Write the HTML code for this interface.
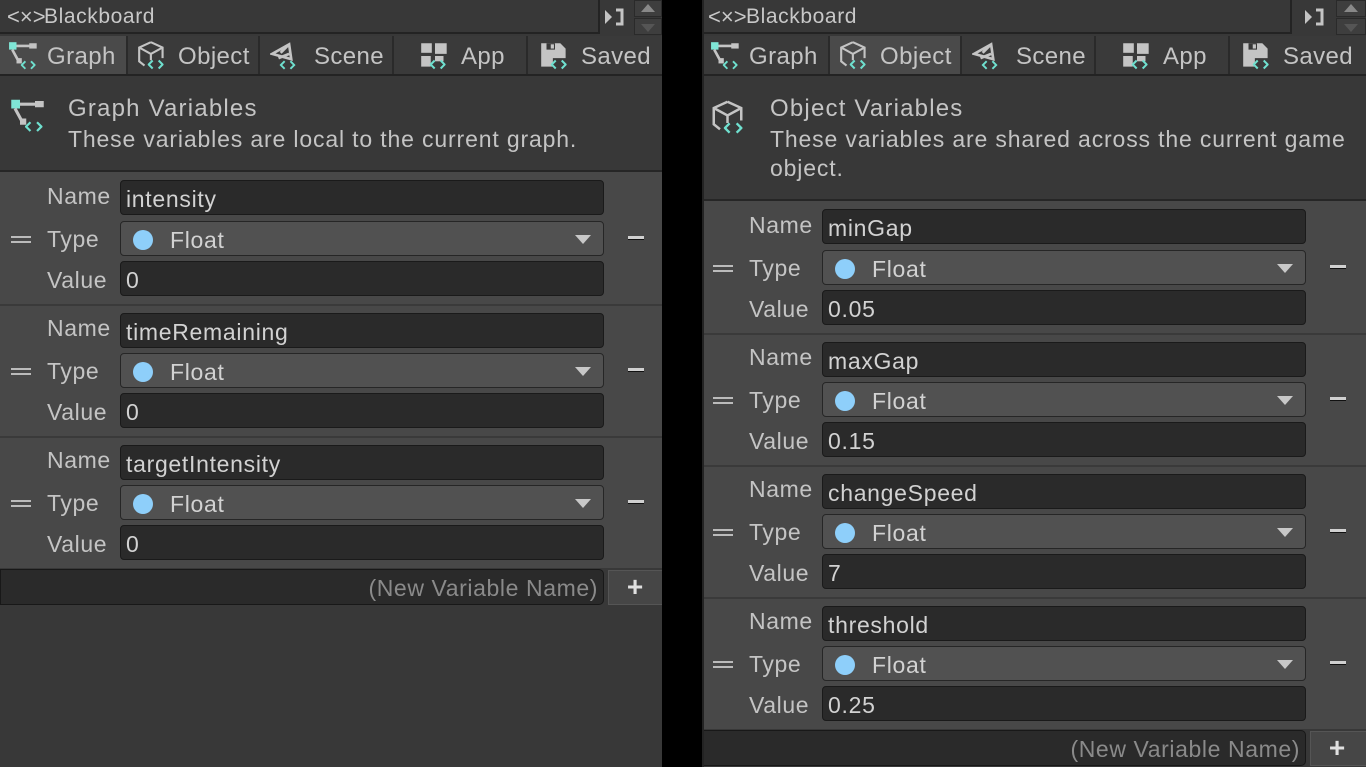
<!DOCTYPE html>
<html><head><meta charset="utf-8"><style>
*{box-sizing:border-box;margin:0;padding:0}
body{width:1366px;height:767px;background:#000;overflow:hidden;font-family:"Liberation Sans",sans-serif;color:#c4c4c4;position:relative}
.p{position:absolute;top:0;height:767px;background:#383838;overflow:hidden}
.a{position:absolute}
.title{left:0;top:0;height:34px;width:600px;border-bottom:2px solid #232323;border-right:2px solid #232323;font-size:21px;letter-spacing:.6px;line-height:33px;padding-left:44px;color:#c8c8c8}
.tabs{left:0;top:36px;height:40px;width:100%;background:#3a3a3a;border-bottom:2px solid #232323}
.tab{position:absolute;top:0;height:38px;width:132px;border-right:2px solid #2a2a2a;font-size:24px;letter-spacing:.4px;line-height:42px;color:#c4c4c4}
.tab.on{background:#4a4a4a}
.tab svg{position:absolute;left:8px;top:5px}
.hdr{left:0;top:76px;width:100%;border-bottom:2px solid #262626}
.h1{position:absolute;left:68px;top:19px;font-size:24px;color:#c4c4c4;letter-spacing:1.2px}
.h2{position:absolute;left:68px;top:49px;font-size:23px;line-height:29px;color:#c4c4c4;width:600px;letter-spacing:.85px}
.row{position:absolute;left:0;width:100%;height:132px;background:#484848;border-top:2px solid #3a3a3a}
.lbl{position:absolute;left:47px;font-size:23px;letter-spacing:.6px;color:#c4c4c4}
.f{position:absolute;left:120px;width:484px;height:35px;background:#2a2a2a;border:1px solid #1a1a1a;border-radius:4px;font-size:23px;letter-spacing:.7px;line-height:36px;padding-left:5px;color:#d2d2d2}
.dd{background:#515151;border-color:#262626}
.dot{position:absolute;left:12px;top:8px;width:20px;height:20px;border-radius:50%;background:#8ecffa}
.dd span{position:absolute;left:49px}
.tri{position:absolute;right:12px;top:13px;width:0;height:0;border-left:8px solid transparent;border-right:8px solid transparent;border-top:9px solid #c8c8c8}
.minus{position:absolute;left:628px;width:16px;height:4px;background:#d0d0d0;border-bottom:1px solid #111}
.hand{position:absolute;left:11px;width:20px;height:7px;border-top:2px solid #bbb;border-bottom:2px solid #bbb}
.nv{position:absolute;left:0;width:604px;height:36px;background:#2a2a2a;border:1px solid #181818;border-radius:0 5px 5px 0;font-size:23px;letter-spacing:.6px;line-height:36px;text-align:right;padding-right:5px;color:#8a8a8a}
.plus{position:absolute;left:608px;width:60px;height:35px;background:#464646;border:1px solid #555;font-size:28px;line-height:32px;text-align:center;color:#e0e0e0;font-weight:bold;padding-right:6px}
.x{position:absolute;top:0;font-size:22px;letter-spacing:0}
</style></head><body>
<svg width="0" height="0" style="position:absolute">
<defs>
<symbol id="code" viewBox="0 0 16 10"><path d="M5 1 1 5l4 4M11 1l4 4-4 4" fill="none" stroke="#6fe0cf" stroke-width="2"/></symbol>
<symbol id="graph" viewBox="0 0 32 28"><rect x="1" y="1" width="7" height="7" fill="#7fe6d6"/><rect x="20" y="2" width="7" height="5" fill="#c4c4c4"/><path d="M8 4.5h13M4 8l6 11" stroke="#c4c4c4" stroke-width="2.5" fill="none"/><rect x="8" y="16" width="5" height="5" fill="#c4c4c4"/><use href="#code" x="12" y="18" width="14" height="9"/></symbol>
<symbol id="cube" viewBox="0 0 32 28"><path d="M14 1 3 6v13l5 4M14 1l11 5v10M3 6l11 6 11-6M14 12v6" stroke="#c4c4c4" stroke-width="2" fill="none"/><use href="#code" x="11" y="17" width="15" height="10"/></symbol>
<symbol id="scene" viewBox="0 0 32 28"><path d="M2 12 18 3l2 14L2 12zM18 3l-8 8M8 16l10-4" stroke="#c4c4c4" stroke-width="2.5" fill="none"/><use href="#code" x="9" y="18" width="15" height="9"/></symbol>
<symbol id="app" viewBox="0 0 32 28"><rect x="3" y="2" width="10" height="9" fill="#c4c4c4"/><rect x="16" y="2" width="11" height="10" fill="#c4c4c4"/><rect x="3" y="14" width="9" height="10" fill="#c4c4c4"/><rect x="16" y="14" width="8" height="5" fill="#c4c4c4"/><use href="#code" x="11" y="17" width="15" height="10"/></symbol>
<symbol id="save" viewBox="0 0 32 28"><path d="M3 2h18l5 5v9H14v8H3z" fill="#c4c4c4"/><rect x="8" y="2" width="8" height="6" fill="#383838"/><rect x="12" y="3" width="3" height="4" fill="#c4c4c4"/><use href="#code" x="12" y="17" width="15" height="10"/></symbol>
</defs></svg>

<!-- LEFT PANEL -->
<div class="p" style="left:0;width:662px">
 <div class="a title"><span class="x" style="left:7px">&lt;×&gt;</span>Blackboard</div>
 <div class="a" style="left:604px;top:8px;width:20px;height:18px"><svg width="22" height="18"><path d="M1 2l7 7-7 7z" fill="#c4c4c4"/><path d="M12 2h6v14h-6" fill="none" stroke="#c4c4c4" stroke-width="3"/></svg></div>
 <div class="a" style="left:634px;top:0;width:28px;height:17px;background:#3e3e3e;border:1px solid #2a2a2a"><div style="margin:3px auto;width:0;border-left:7px solid transparent;border-right:7px solid transparent;border-bottom:8px solid #888"></div></div>
 <div class="a" style="left:634px;top:18px;width:28px;height:17px;background:#3e3e3e;border:1px solid #2a2a2a"><div style="margin:5px auto;width:0;border-left:7px solid transparent;border-right:7px solid transparent;border-top:8px solid #555"></div></div>
 <div class="a tabs">
  <div class="tab on" style="left:0;width:128px"><svg width="34" height="30"><use href="#graph"/></svg><span style="position:absolute;left:47px">Graph</span></div>
  <div class="tab" style="left:128px"><svg width="34" height="30"><use href="#cube"/></svg><span style="position:absolute;left:50px">Object</span></div>
  <div class="tab" style="left:262px"><svg width="34" height="30"><use href="#scene"/></svg><span style="position:absolute;left:52px">Scene</span></div>
  <div class="tab" style="left:396px"><svg width="34" height="30" style="left:22px"><use href="#app"/></svg><span style="position:absolute;left:65px">App</span></div>
  <div class="tab" style="left:530px;border-right:none"><svg width="34" height="30"><use href="#save"/></svg><span style="position:absolute;left:51px">Saved</span></div>
 </div>
 <div class="a hdr" style="height:96px">
  <svg class="a" style="left:10px;top:22px" width="40" height="36" viewBox="0 0 32 28"><use href="#graph"/></svg>
  <div class="h1">Graph Variables</div>
  <div class="h2">These variables are local to the current graph.</div>
 </div>

 <div class="row" style="top:172px;border-top:none">
  <div class="lbl" style="top:11px">Name</div><div class="f" style="top:8px">intensity</div>
  <div class="hand" style="top:64px"></div><div class="lbl" style="top:54px">Type</div><div class="f dd" style="top:49px"><div class="dot"></div><span>Float</span><div class="tri"></div></div><div class="minus" style="top:64px"></div>
  <div class="lbl" style="top:95px">Value</div><div class="f" style="top:89px">0</div>
 </div>
 <div class="row" style="top:304px">
  <div class="lbl" style="top:9px">Name</div><div class="f" style="top:7px">timeRemaining</div>
  <div class="hand" style="top:62px"></div><div class="lbl" style="top:52px">Type</div><div class="f dd" style="top:47px"><div class="dot"></div><span>Float</span><div class="tri"></div></div><div class="minus" style="top:62px"></div>
  <div class="lbl" style="top:93px">Value</div><div class="f" style="top:87px">0</div>
 </div>
 <div class="row" style="top:436px">
  <div class="lbl" style="top:9px">Name</div><div class="f" style="top:7px">targetIntensity</div>
  <div class="hand" style="top:62px"></div><div class="lbl" style="top:52px">Type</div><div class="f dd" style="top:47px"><div class="dot"></div><span>Float</span><div class="tri"></div></div><div class="minus" style="top:62px"></div>
  <div class="lbl" style="top:93px">Value</div><div class="f" style="top:87px">0</div>
 </div>
 <div class="a" style="left:0;top:568px;width:100%;height:38px;background:#383838"></div>
 <div class="nv" style="top:569px">(New Variable Name)</div>
 <div class="plus" style="top:570px">+</div>
</div>

<!-- RIGHT PANEL -->
<div class="p" style="left:702px;width:664px">
 <div class="a" style="left:0;top:0;width:2px;height:767px;background:#232323;z-index:5"></div>
 <div class="a title" style="width:590px"><span class="x" style="left:6px">&lt;×&gt;</span>Blackboard</div>
 <div class="a" style="left:602px;top:8px;width:20px;height:18px"><svg width="22" height="18"><path d="M1 2l7 7-7 7z" fill="#c4c4c4"/><path d="M12 2h6v14h-6" fill="none" stroke="#c4c4c4" stroke-width="3"/></svg></div>
 <div class="a" style="left:634px;top:0;width:30px;height:17px;background:#3e3e3e;border:1px solid #2a2a2a"><div style="margin:3px auto;width:0;border-left:7px solid transparent;border-right:7px solid transparent;border-bottom:8px solid #888"></div></div>
 <div class="a" style="left:634px;top:18px;width:30px;height:17px;background:#3e3e3e;border:1px solid #2a2a2a"><div style="margin:5px auto;width:0;border-left:7px solid transparent;border-right:7px solid transparent;border-top:8px solid #555"></div></div>
 <div class="a tabs">
  <div class="tab" style="left:0;width:128px"><svg width="34" height="30"><use href="#graph"/></svg><span style="position:absolute;left:47px">Graph</span></div>
  <div class="tab on" style="left:128px"><svg width="34" height="30"><use href="#cube"/></svg><span style="position:absolute;left:50px">Object</span></div>
  <div class="tab" style="left:262px"><svg width="34" height="30"><use href="#scene"/></svg><span style="position:absolute;left:52px">Scene</span></div>
  <div class="tab" style="left:396px"><svg width="34" height="30" style="left:22px"><use href="#app"/></svg><span style="position:absolute;left:65px">App</span></div>
  <div class="tab" style="left:530px;border-right:none"><svg width="34" height="30"><use href="#save"/></svg><span style="position:absolute;left:51px">Saved</span></div>
 </div>
 <div class="a hdr" style="height:125px">
  <svg class="a" style="left:8px;top:24px" width="40" height="36" viewBox="0 0 32 28"><use href="#cube"/></svg>
  <div class="h1">Object Variables</div>
  <div class="h2" style="width:596px">These variables are shared across the current game object.</div>
 </div>

 <div class="row" style="top:201px;border-top:none">
  <div class="lbl" style="top:11px">Name</div><div class="f" style="top:8px">minGap</div>
  <div class="hand" style="top:64px"></div><div class="lbl" style="top:54px">Type</div><div class="f dd" style="top:49px"><div class="dot"></div><span>Float</span><div class="tri"></div></div><div class="minus" style="top:64px"></div>
  <div class="lbl" style="top:95px">Value</div><div class="f" style="top:89px">0.05</div>
 </div>
 <div class="row" style="top:333px">
  <div class="lbl" style="top:9px">Name</div><div class="f" style="top:7px">maxGap</div>
  <div class="hand" style="top:62px"></div><div class="lbl" style="top:52px">Type</div><div class="f dd" style="top:47px"><div class="dot"></div><span>Float</span><div class="tri"></div></div><div class="minus" style="top:62px"></div>
  <div class="lbl" style="top:93px">Value</div><div class="f" style="top:87px">0.15</div>
 </div>
 <div class="row" style="top:465px">
  <div class="lbl" style="top:9px">Name</div><div class="f" style="top:7px">changeSpeed</div>
  <div class="hand" style="top:62px"></div><div class="lbl" style="top:52px">Type</div><div class="f dd" style="top:47px"><div class="dot"></div><span>Float</span><div class="tri"></div></div><div class="minus" style="top:62px"></div>
  <div class="lbl" style="top:93px">Value</div><div class="f" style="top:87px">7</div>
 </div>
 <div class="row" style="top:597px">
  <div class="lbl" style="top:9px">Name</div><div class="f" style="top:7px">threshold</div>
  <div class="hand" style="top:62px"></div><div class="lbl" style="top:52px">Type</div><div class="f dd" style="top:47px"><div class="dot"></div><span>Float</span><div class="tri"></div></div><div class="minus" style="top:62px"></div>
  <div class="lbl" style="top:93px">Value</div><div class="f" style="top:87px">0.25</div>
 </div>
 <div class="a" style="left:0;top:729px;width:100%;height:40px;background:#383838"></div>
 <div class="nv" style="top:730px">(New Variable Name)</div>
 <div class="plus" style="top:731px">+</div>
</div>
</body></html>
